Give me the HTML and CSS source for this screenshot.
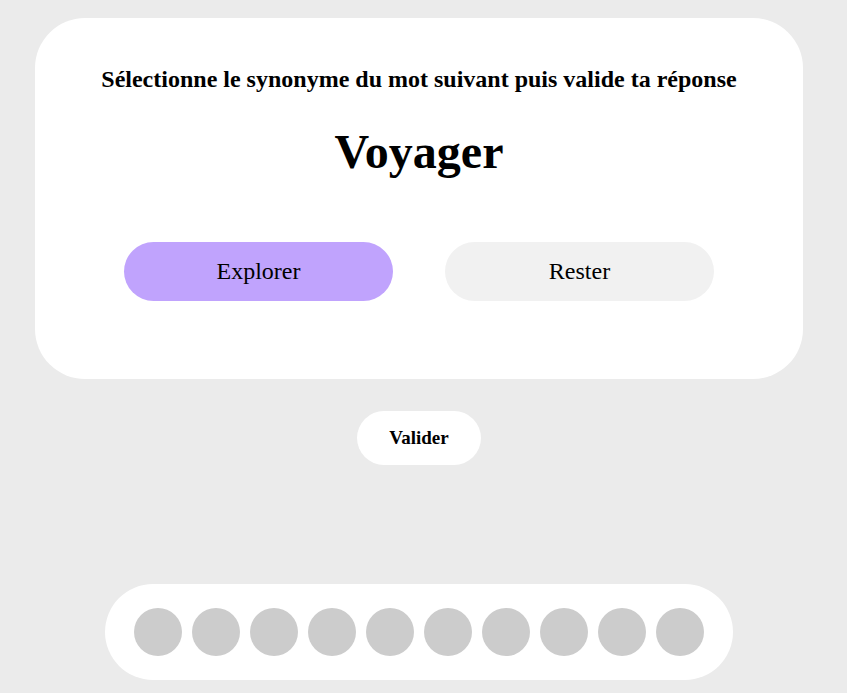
FILE: index.html
```html
<!DOCTYPE html>
<html lang="fr">
<head>
<meta charset="utf-8">
<link rel="stylesheet" href="styles.css">
</head>
<body>
<div class="page">
  <div class="card">
    <p class="instruction">Sélectionne le synonyme du mot suivant puis valide ta réponse</p>
    <h1 class="word">Voyager</h1>
    <div class="choices">
      <button class="choice selected">Explorer</button>
      <button class="choice">Rester</button>
    </div>
  </div>
  <button class="validate">Valider</button>
  <div class="progress">
    <span class="dot"></span><span class="dot"></span><span class="dot"></span><span class="dot"></span><span class="dot"></span>
    <span class="dot"></span><span class="dot"></span><span class="dot"></span><span class="dot"></span><span class="dot"></span>
  </div>
</div>
</body>
</html>
```

FILE: styles.css
```css
html, body {
  margin: 0;
  padding: 0;
  background: #ebebeb;
  font-family: "Liberation Serif", "Times New Roman", serif;
  color: #000;
}
.page {
  width: 838px;
  display: flex;
  flex-direction: column;
  align-items: center;
  padding-top: 18px;
}
.card {
  width: 768px;
  height: 361px;
  box-sizing: border-box;
  background: #fff;
  border-radius: 50px;
  display: flex;
  flex-direction: column;
  align-items: center;
  padding-top: 48px;
}
.instruction {
  margin: 0;
  font-size: 24px;
  font-weight: bold;
  line-height: 27px;
}
.word {
  margin: 31px 0 0;
  font-size: 48px;
  font-weight: bold;
  line-height: 55px;
}
.choices {
  margin-top: 63px;
  display: flex;
  gap: 52px;
}
.choice {
  width: 269px;
  height: 59px;
  border: none;
  border-radius: 30px;
  background: #f1f1f1;
  font-family: "Liberation Serif", "Times New Roman", serif;
  font-size: 24px;
  color: #000;
  padding: 0;
}
.choice.selected {
  background: #c0a3fd;
}
.validate {
  margin-top: 32px;
  width: 124px;
  height: 54px;
  border: none;
  border-radius: 27px;
  background: #fff;
  font-family: "Liberation Serif", "Times New Roman", serif;
  font-weight: bold;
  font-size: 19px;
  color: #000;
  padding: 0;
}
.progress {
  margin-top: 119px;
  width: 628px;
  height: 96px;
  box-sizing: border-box;
  background: #fff;
  border-radius: 48px;
  display: flex;
  align-items: center;
  justify-content: center;
  gap: 10px;
}
.dot {
  width: 48px;
  height: 48px;
  border-radius: 50%;
  background: #cccccc;
}
```
